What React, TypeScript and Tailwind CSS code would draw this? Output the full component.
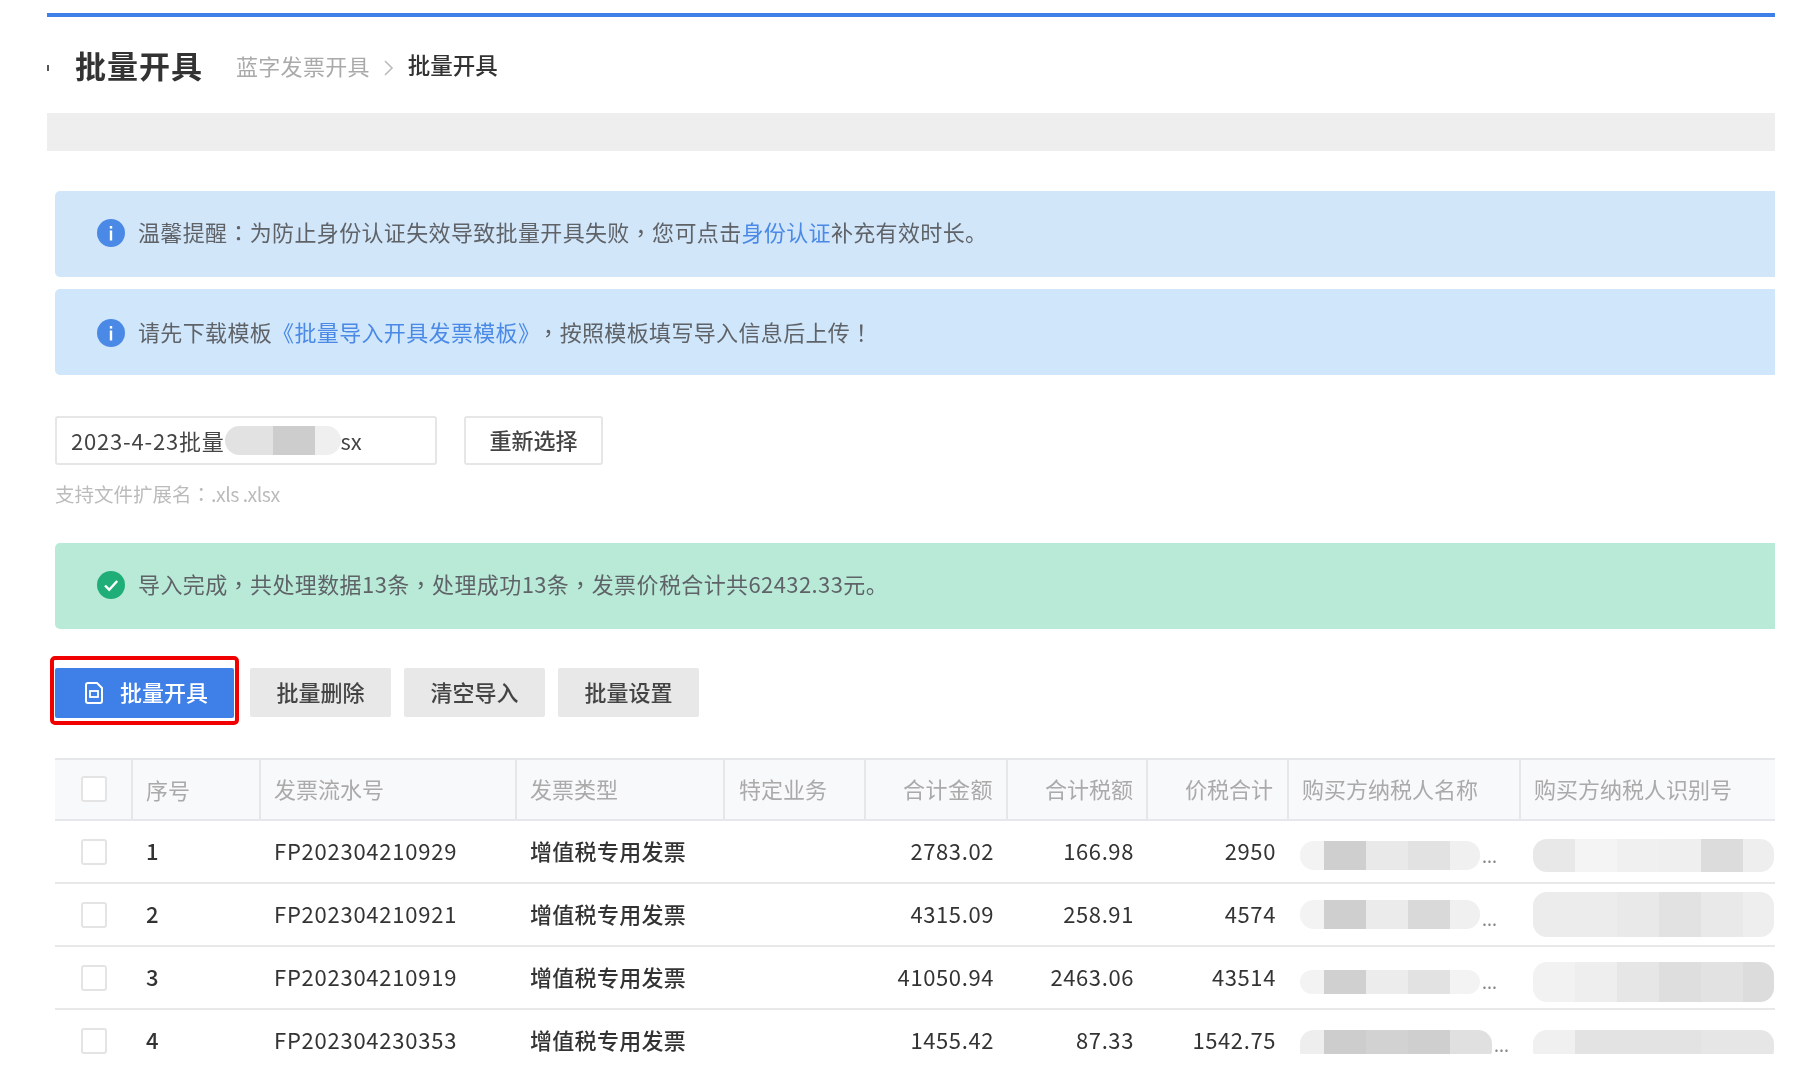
const font = "font-['Noto_Sans_CJK_SC','Liberation_Sans',sans-serif]";

const cols = "grid grid-cols-[76px_128px_256px_208px_141px_142px_140px_141px_232px_256px]";

const rows = [
  {
    no: "1",
    id: "FP202304210929",
    amount: "2783.02",
    tax: "166.98",
    total: "2950",
    name: ["bg-[#f3f3f3] w-[24px]", "bg-[#cfcfcf] w-[42px]", "bg-[#e9e9e9] w-[42px]", "bg-[#e2e2e2] w-[42px]", "bg-[#f0f0f0] w-[30px]"],
    nameBox: "h-[29px] mt-2",
    code: ["bg-[#e8e8e8] w-[42px]", "bg-[#f4f4f4] w-[42px]", "bg-[#f0f0f0] w-[42px]", "bg-[#efefef] w-[42px]", "bg-[#dcdcdc] w-[42px]", "bg-[#eeeeee] w-[31px]"],
    codeBox: "h-[33px] mt-2",
  },
  {
    no: "2",
    id: "FP202304210921",
    amount: "4315.09",
    tax: "258.91",
    total: "4574",
    name: ["bg-[#f3f3f3] w-[24px]", "bg-[#cfcfcf] w-[42px]", "bg-[#ebebeb] w-[42px]", "bg-[#d9d9d9] w-[42px]", "bg-[#f0f0f0] w-[30px]"],
    nameBox: "h-[29px]",
    code: ["bg-[#ececec] w-[42px]", "bg-[#ececec] w-[42px]", "bg-[#e9e9e9] w-[42px]", "bg-[#e2e2e2] w-[42px]", "bg-[#e9e9e9] w-[42px]", "bg-[#eeeeee] w-[31px]"],
    codeBox: "h-[45px]",
  },
  {
    no: "3",
    id: "FP202304210919",
    amount: "41050.94",
    tax: "2463.06",
    total: "43514",
    name: ["bg-[#f3f3f3] w-[24px]", "bg-[#d0d0d0] w-[42px]", "bg-[#ececec] w-[42px]", "bg-[#e2e2e2] w-[42px]", "bg-[#f3f3f3] w-[30px]"],
    nameBox: "h-[24px] mt-2",
    code: ["bg-[#f2f2f2] w-[42px]", "bg-[#eeeeee] w-[42px]", "bg-[#e6e6e6] w-[42px]", "bg-[#dedede] w-[42px]", "bg-[#e2e2e2] w-[42px]", "bg-[#dcdcdc] w-[31px]"],
    codeBox: "h-[40px] mt-2",
  },
  {
    no: "4",
    id: "FP202304230353",
    amount: "1455.42",
    tax: "87.33",
    total: "1542.75",
    name: ["bg-[#eeeeee] w-[24px]", "bg-[#cdcdcd] w-[42px]", "bg-[#d2d2d2] w-[42px]", "bg-[#cfcfcf] w-[42px]", "bg-[#e0e0e0] w-[42px]"],
    nameBox: "h-[34px] mt-3",
    code: ["bg-[#f0f0f0] w-[42px]", "bg-[#e3e3e3] w-[42px]", "bg-[#e3e3e3] w-[42px]", "bg-[#e3e3e3] w-[42px]", "bg-[#e6e6e6] w-[42px]", "bg-[#e6e6e6] w-[31px]"],
    codeBox: "h-[34px] mt-3",
  },
];

// full-width punctuation, the TC face centres it in its box like the reference
function Punct({ c }: { c: string }) {
  return <span className="font-['Noto_Sans_CJK_TC',sans-serif]">{c}</span>;
}

function InfoIcon() {
  return (
    <svg width="28" height="28" viewBox="0 0 28 28" className="shrink-0 mb-[2px]">
      <circle cx="14" cy="14" r="14" fill="#4a8ae6" />
      <rect x="12.8" y="7" width="2.4" height="2.6" fill="#fff" />
      <rect x="12.8" y="11.5" width="2.4" height="10" fill="#fff" />
    </svg>
  );
}

function CheckIcon() {
  return (
    <svg width="28" height="28" viewBox="0 0 28 28" className="shrink-0 mb-[2px]">
      <circle cx="14" cy="14" r="14" fill="#1fae78" />
      <path d="M8 14.5l4.2 4.2L20.2 10" fill="none" stroke="#fff" strokeWidth="2.4" />
    </svg>
  );
}

function DocIcon() {
  return (
    <svg width="20" height="22" viewBox="0 0 20 22" className="shrink-0">
      <path d="M2 3a2 2 0 0 1 2-2h9l5 5v13a2 2 0 0 1-2 2H4a2 2 0 0 1-2-2z" fill="none" stroke="#fff" strokeWidth="2" />
      <rect x="6" y="9" width="8" height="6" fill="none" stroke="#fff" strokeWidth="1.8" />
    </svg>
  );
}

function Alert({ tone, children }: { tone: string; children: React.ReactNode }) {
  return (
    <div className={`h-[86px] flex items-center gap-[13px] pl-[42px] rounded-l-[5px] text-[22px] text-[#5f6368] ${tone}`}>
      {children}
    </div>
  );
}

function Mosaic({ segs, box }: { segs: string[]; box: string }) {
  return (
    <div className={`flex overflow-hidden rounded-[14px] ${box}`}>
      {segs.map((s, i) => (
        <div key={i} className={`h-full ${s}`} />
      ))}
    </div>
  );
}

function GrayButton({ label }: { label: string }) {
  return (
    <button className="w-[141px] h-[49px] bg-[#e8e8e8] rounded-[2px] text-[22px] font-medium text-[#444] pb-[3px]">{label}</button>
  );
}

export default function App() {
  return (
    <div className={`w-[1814px] h-[1088px] overflow-hidden bg-white pl-[47px] pr-[39px] pt-[13px] blur-[0.7px] ${font}`}>
      <div className="border-t-4 border-[#3f80e8]">
        {/* page title + breadcrumb */}
        <div className="h-[96px] flex items-center">
          <span className="w-[2px] h-[6px] bg-[#555] mt-[6px]" />
          <h1 className="ml-[26px] text-[31px] font-semibold text-[#333] tracking-[1px]">批量开具</h1>
          <span className="ml-[33px] text-[22px] text-[#aaa] tracking-[0.3px]">蓝字发票开具</span>
          <svg width="12" height="20" viewBox="0 0 12 20" className="ml-[13px] mt-[6px]">
            <path d="M2 3l7 7-7 7" fill="none" stroke="#bbb" strokeWidth="1.6" />
          </svg>
          <span className="ml-[13px] text-[22.5px] font-medium text-[#333]">批量开具</span>
        </div>
        <div className="h-[38px] bg-[#eeeeee]" />

        <div className="pl-[8px] pt-[40px]">
          <div className="flex flex-col gap-[12px]">
            <Alert tone="bg-[#d2e6fa]">
              <InfoIcon />
              <span className="pb-[5px] tracking-[0.35px]">
                温馨提醒<Punct c={"\uFF1A"} />为防止身份认证失效导致批量开具失败<Punct c={"\uFF0C"} />您可点击<span className="text-[#4a8ae6]">身份认证</span>补充有效时长。
              </span>
            </Alert>
            <Alert tone="bg-[#d0e6fb] pt-[3px]">
              <InfoIcon />
              <span className="pb-[5px] tracking-[0.35px]">
                请先下载模板<span className="text-[#4a8ae6]">《批量导入开具发票模板》</span><span className="ml-[8px]"><Punct c={"\uFF0C"} /></span>按照模板填写导入信息后上传<Punct c={"\uFF01"} />
              </span>
            </Alert>
          </div>

          {/* file picker */}
          <div className="mt-[41px] flex gap-[27px]">
            <div className="w-[382px] h-[49px] border-2 border-[#e6e6e6] rounded-[3px] pl-[14px] flex items-center text-[22px] text-[#444]">
              <span className="tracking-[0.8px]">2023-4-23批量</span>
              <div className="flex h-[29px] w-[116px] overflow-hidden rounded-full">
                <div className="w-[48px] bg-[#e2e2e2]" />
                <div className="w-[42px] bg-[#cdcdcd]" />
                <div className="w-[26px] bg-[#efefef]" />
              </div>
              <span>sx</span>
            </div>
            <button className="w-[139px] h-[49px] border-2 border-[#e6e6e6] rounded-[3px] text-[22px] font-medium text-[#444] pb-[2px]">重新选择</button>
          </div>
          <p className="mt-[13px] h-[32px] text-[19.5px] leading-[32px] text-[#bbb]">
            支持文件扩展名<Punct c={"\uFF1A"} />
            <span className="tracking-[-0.5px]">.xls .xlsx</span>
          </p>

          <div className="mt-[33px]">
            <Alert tone="bg-[#b9ead8]">
              <CheckIcon />
              <span className="pb-[5px] tracking-[0.4px]">
                导入完成<Punct c={"\uFF0C"} />共处理数据13条<Punct c={"\uFF0C"} />处理成功13条<Punct c={"\uFF0C"} />发票价税合计共62432.33元。
              </span>
            </Alert>
          </div>

          {/* actions */}
          <div className="mt-[39px] flex gap-[13px]">
            <div className="relative mr-[3px]">
              <button className="w-[179px] h-[50px] bg-[#3f80e8] rounded-[2px] flex items-center pl-[29px] gap-[16px] text-[22px] font-medium text-white">
                <DocIcon />
                <span className="pb-[3px]">批量开具</span>
              </button>
              <div className="absolute -left-[5px] -right-[5px] -top-[12px] -bottom-[7px] border-4 border-[#f00000] rounded-[5px]" />
            </div>
            <GrayButton label="批量删除" />
            <GrayButton label="清空导入" />
            <GrayButton label="批量设置" />
          </div>

          {/* table */}
          <div className="mt-[40px] h-[296px] overflow-hidden text-[22px]">
            <div className={`${cols} h-[63px] bg-[#f8f9fb] border-t-2 border-b-2 border-[#e6e7ea] text-[#aaa]`}>
              <div className="flex items-center justify-center pb-[2px] pl-[1px]">
                <div className="w-[26px] h-[26px] bg-white border-2 border-[#e4e4e4] rounded-[3px]" />
              </div>
              <div className="flex items-center pl-[13px] border-l-2 border-[#e6e7ea]">序号</div>
              <div className="flex items-center pl-[13px] pb-[3px] border-l-2 border-[#e6e7ea]">发票流水号</div>
              <div className="flex items-center pl-[13px] pb-[3px] border-l-2 border-[#e6e7ea]">发票类型</div>
              <div className="flex items-center pl-[14px] pb-[3px] border-l-2 border-[#e6e7ea]">特定业务</div>
              <div className="flex items-center justify-end pr-[13px] pb-[3px] border-l-2 border-[#e6e7ea] tracking-[0.5px]">合计金额</div>
              <div className="flex items-center justify-end pr-[13px] pb-[3px] border-l-2 border-[#e6e7ea]">合计税额</div>
              <div className="flex items-center justify-end pr-[14px] pb-[3px] border-l-2 border-[#e6e7ea]">价税合计</div>
              <div className="flex items-center pl-[13px] pb-[3px] border-l-2 border-[#e6e7ea]">购买方纳税人名称</div>
              <div className="flex items-center pl-[13px] pb-[3px] border-l-2 border-[#e6e7ea]">购买方纳税人识别号</div>
            </div>
            {rows.map((r) => (
              <div key={r.no} className={`${cols} h-[63px] border-b-2 border-[#e8e8e8] text-[#333]`}>
                <div className="flex items-center justify-center pl-[1px]">
                  <div className="w-[26px] h-[26px] bg-white border-2 border-[#e4e4e4] rounded-[3px]" />
                </div>
                <div className="flex items-center pl-[15px] pb-[2px] font-medium">{r.no}</div>
                <div className="flex items-center pl-[15px] pb-[2px] tracking-[0.75px]">{r.id}</div>
                <div className="flex items-center pl-[15px] pb-[2px] font-medium tracking-[0.3px]">增值税专用发票</div>
                <div />
                <div className="flex items-center justify-end pr-[12px] pb-[2px] tracking-[0.6px]">{r.amount}</div>
                <div className="flex items-center justify-end pr-[12px] pb-[2px] tracking-[0.6px]">{r.tax}</div>
                <div className="flex items-center justify-end pr-[11px] pb-[2px] tracking-[0.6px]">{r.total}</div>
                <div className="flex items-center pl-[13px] gap-[2px]">
                  <Mosaic segs={r.name} box={r.nameBox} />
                  <span className="text-[18px] text-[#888] mt-2">...</span>
                </div>
                <div className="flex items-center pl-[14px] overflow-hidden">
                  <Mosaic segs={r.code} box={r.codeBox} />
                </div>
              </div>
            ))}
          </div>
        </div>
      </div>
    </div>
  );
}
